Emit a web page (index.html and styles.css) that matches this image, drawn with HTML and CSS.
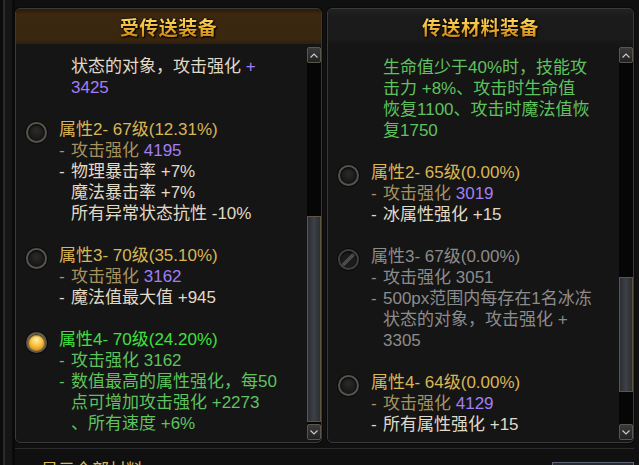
FILE: index.html
```html
<!DOCTYPE html>
<html lang="zh-CN">
<head>
<meta charset="utf-8">
<title>装备传送</title>
<link rel="stylesheet" href="styles.css">
</head>
<body>
<div class="window">
  <div class="panels">
    <section class="panel">
      <header class="panel-head head-brown"><h2 class="title">受传送装备</h2></header>
      <div class="panel-body">
        <div class="list">
          <div class="group">
            <div class="lines">
              <div class="ln indent c-white">状态的对象，攻击强化 <span class="c-purple">+</span></div>
              <div class="ln indent c-purple">3425</div>
            </div>
          </div>
          <div class="group">
            <span class="radio"></span>
            <div class="lines">
              <div class="ln c-gold">属性2- 67级(12.31%)</div>
              <div class="ln c-tan"><span class="dash">-</span>攻击强化 <span class="c-purple">4195</span></div>
              <div class="ln c-white"><span class="dash">-</span>物理暴击率 +7%</div>
              <div class="ln indent c-white">魔法暴击率 +7%</div>
              <div class="ln indent c-white">所有异常状态抗性 -10%</div>
            </div>
          </div>
          <div class="group">
            <span class="radio"></span>
            <div class="lines">
              <div class="ln c-gold">属性3- 70级(35.10%)</div>
              <div class="ln c-tan"><span class="dash">-</span>攻击强化 <span class="c-purple">3162</span></div>
              <div class="ln c-white"><span class="dash">-</span>魔法值最大值 +945</div>
            </div>
          </div>
          <div class="group">
            <span class="radio is-on"></span>
            <div class="lines">
              <div class="ln c-lime">属性4- 70级(24.20%)</div>
              <div class="ln c-green"><span class="dash">-</span>攻击强化 3162</div>
              <div class="ln c-green"><span class="dash">-</span>数值最高的属性强化，每50</div>
              <div class="ln indent c-green">点可增加攻击强化 +2273</div>
              <div class="ln indent c-green">、所有速度 +6%</div>
            </div>
          </div>
        </div>
        <div class="scrollbar">
          <div class="sb-btn"><svg width="8" height="5" viewBox="0 0 8 5"><path d="M0.5 4.5 L4 1 L7.5 4.5" fill="none" stroke="#c8c8c8" stroke-width="1.2"/></svg></div>
          <div class="sb-track"><div class="sb-thumb" style="margin-top:153px;height:206px"></div></div>
          <div class="sb-btn"><svg width="8" height="5" viewBox="0 0 8 5"><path d="M0.5 0.5 L4 4 L7.5 0.5" fill="none" stroke="#c8c8c8" stroke-width="1.2"/></svg></div>
        </div>
      </div>
    </section>
    <section class="panel">
      <header class="panel-head head-dark"><h2 class="title">传送材料装备</h2></header>
      <div class="panel-body">
        <div class="list list-right">
          <div class="group">
            <div class="lines">
              <div class="ln indent c-green">生命值少于40%时，技能攻</div>
              <div class="ln indent c-green">击力 +8%、攻击时生命值</div>
              <div class="ln indent c-green">恢复1100、攻击时魔法值恢</div>
              <div class="ln indent c-green">复1750</div>
            </div>
          </div>
          <div class="group">
            <span class="radio"></span>
            <div class="lines">
              <div class="ln c-gold">属性2- 65级(0.00%)</div>
              <div class="ln c-tan"><span class="dash">-</span>攻击强化 <span class="c-purple">3019</span></div>
              <div class="ln c-white"><span class="dash">-</span>冰属性强化 +15</div>
            </div>
          </div>
          <div class="group">
            <span class="radio is-off"></span>
            <div class="lines">
              <div class="ln c-gray">属性3- 67级(0.00%)</div>
              <div class="ln c-gray"><span class="dash">-</span>攻击强化 3051</div>
              <div class="ln c-gray"><span class="dash">-</span>500px范围内每存在1名冰冻</div>
              <div class="ln indent c-gray">状态的对象，攻击强化 +</div>
              <div class="ln indent c-gray">3305</div>
            </div>
          </div>
          <div class="group">
            <span class="radio"></span>
            <div class="lines">
              <div class="ln c-gold">属性4- 64级(0.00%)</div>
              <div class="ln c-tan"><span class="dash">-</span>攻击强化 <span class="c-purple">4129</span></div>
              <div class="ln c-white"><span class="dash">-</span>所有属性强化 +15</div>
            </div>
          </div>
        </div>
        <div class="scrollbar">
          <div class="sb-btn"><svg width="8" height="5" viewBox="0 0 8 5"><path d="M0.5 4.5 L4 1 L7.5 4.5" fill="none" stroke="#c8c8c8" stroke-width="1.2"/></svg></div>
          <div class="sb-track"><div class="sb-thumb" style="margin-top:214px;height:115px"></div></div>
          <div class="sb-btn"><svg width="8" height="5" viewBox="0 0 8 5"><path d="M0.5 0.5 L4 4 L7.5 0.5" fill="none" stroke="#c8c8c8" stroke-width="1.2"/></svg></div>
        </div>
      </div>
    </section>
  </div>
  <div class="footer">
    <span class="checkbox"></span>
    <span class="footer-text">显示全部材料</span>
    <span class="footer-btn"></span>
  </div>
</div>
</body>
</html>
```
FILE: styles.css
```css
html, body {
  margin: 0;
  padding: 0;
}
body {
  width: 639px;
  height: 465px;
  overflow: hidden;
  background: #111111;
  font-family: "Liberation Sans", "Noto Sans CJK SC", sans-serif;
}
.window {
  height: 465px;
  box-sizing: border-box;
  padding: 8px 5px 0 15px;
  overflow: hidden;
  background:
    linear-gradient(to right, #0b0b0b 0 3px, #2a2a2a 3px 5px, #161616 5px 12px, #0a0a0a 12px 15px, transparent 15px),
    #101010;
}
.panels {
  display: flex;
  gap: 5px;
}
.panel {
  width: 307px;
  height: 435px;
  box-sizing: border-box;
  border: 1px solid #3a3a3a;
  border-radius: 5px;
  background: #151515;
  display: flex;
  flex-direction: column;
  overflow: hidden;
  box-shadow: 0 0 0 1px #0a0a0a;
}
.panel-head {
  height: 35px;
  flex: none;
  display: flex;
  align-items: center;
  justify-content: center;
}
.head-brown {
  background: linear-gradient(#2c1b0a, #3c2811 15%, #3a2710 85%, #2e1e0c);
}
.head-dark {
  background: linear-gradient(#222222, #1b1b1b 20%, #1a1a1a 85%, #161616);
}
.title {
  margin: 0;
  font-family: "Noto Sans CJK SC", sans-serif;
  font-size: 19px;
  font-weight: 700;
  letter-spacing: 0.5px;
  line-height: 24px;
  background: linear-gradient(#ffe27a, #f2bb35 50%, #c07a15);
  -webkit-background-clip: text;
  background-clip: text;
  color: transparent;
  filter: drop-shadow(0 0 1px #000) drop-shadow(1px 1px 0 #120a02);
}
.panel-body {
  flex: 1;
  display: flex;
  min-height: 0;
}
.list {
  flex: 1;
  padding-top: 12px;
  overflow: hidden;
}
.list-right {
  padding-top: 13px;
}
.group {
  display: grid;
  grid-template-columns: 21px auto;
  column-gap: 12px;
  padding-left: 10px;
}
.group + .group {
  margin-top: 21px;
}
.lines {
  grid-column: 2;
}
.ln {
  height: 21px;
  line-height: 21px;
  font-size: 17px;
  white-space: nowrap;
}
.ln.indent {
  padding-left: 12px;
}
.dash {
  display: inline-block;
  width: 12px;
}
.c-gold { color: #d9b656; }
.c-tan { color: #a8925f; }
.c-white { color: #e0dac6; }
.c-purple { color: #a37ef6; }
.c-lime { color: #3fe03f; }
.c-green { color: #5fc25f; }
.c-gray { color: #8c8c8c; }

.radio {
  grid-column: 1;
  width: 21px;
  height: 21px;
  margin-top: 3px;
  box-sizing: border-box;
  border-radius: 50%;
  border: 2px solid #57534c;
  background: radial-gradient(circle at 50% 40%, #2b2b2b, #151515 75%);
  box-shadow: 0 0 0 1px #0b0b0b, inset 0 1px 2px #000;
}
.radio.is-on {
  border-color: #5e5a52;
  background: radial-gradient(circle at 50% 35%, #ffeeb0 0, #fbc545 40%, #d9860e 85%);
}
.radio.is-off {
  border-color: #3f3f3f;
  background:
    linear-gradient(135deg, transparent 44%, #4a4a4a 44% 56%, transparent 56%),
    #1b1b1b;
}

.scrollbar {
  width: 14px;
  flex: none;
  margin: 3px 0 2px 0;
  display: flex;
  flex-direction: column;
}
.sb-btn {
  height: 16px;
  flex: none;
  box-sizing: border-box;
  border: 1px solid #5a564b;
  border-radius: 2px;
  background: linear-gradient(#3a3a3a, #222222);
  display: flex;
  align-items: center;
  justify-content: center;
}
.sb-track {
  flex: 1;
  background: #060606;
  display: flex;
  flex-direction: column;
}
.sb-thumb {
  flex: none;
  box-sizing: border-box;
  border: 1px solid #5f5541;
  background: linear-gradient(to right, #2b2e32, #3d4147 50%, #2b2e32);
}

.footer {
  margin-top: 5px;
  border-top: 1px solid #2c2c2c;
  padding-top: 11px;
  display: flex;
  align-items: flex-start;
  gap: 10px;
}
.checkbox {
  width: 16px;
  height: 16px;
  margin-top: 6px;
  box-sizing: border-box;
  border: 1px solid #7a7a7a;
  background: #3a3a3a;
}
.footer-text {
  font-size: 17px;
  line-height: 21px;
  color: #d9b656;
}
.footer-btn {
  margin-left: auto;
  width: 82px;
  height: 20px;
  margin-top: 2px;
  box-sizing: border-box;
  border: 1px solid #5c6372;
  background: #262a31;
}
```
